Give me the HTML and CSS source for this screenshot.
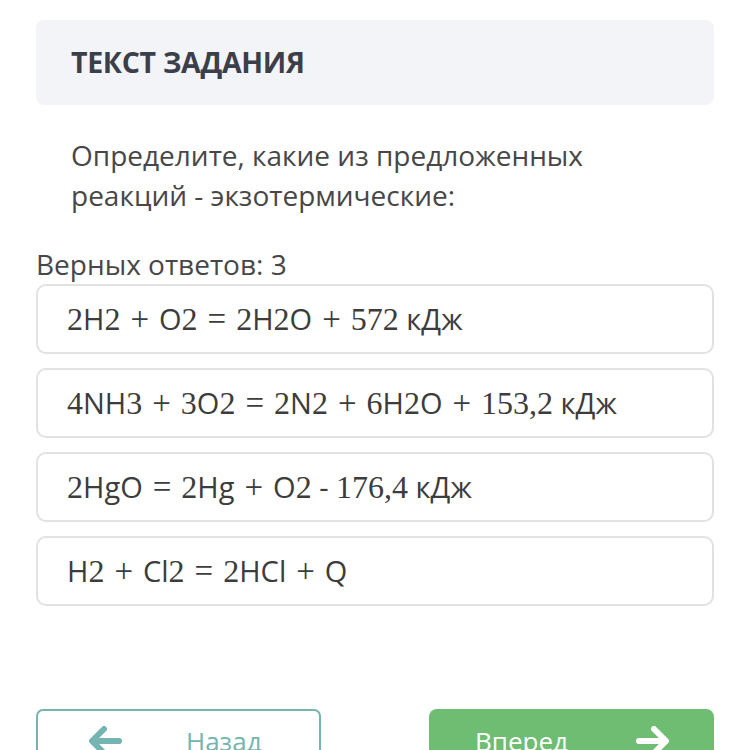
FILE: index.html
```html
<!DOCTYPE html>
<html lang="ru">
<head>
    <meta charset="UTF-8">
    <meta name="viewport" content="width=device-width, initial-scale=1.0">
    <title>Задание</title>
    <link rel="stylesheet" href="styles.css">
</head>
<body>
    <div class="page">
        <div class="task_head">ТЕКСТ ЗАДАНИЯ</div>
        <p class="task_text">Определите, какие из предложенных реакций - экзотермические:</p>
        <p class="count">Верных ответов: 3</p>
        <ul class="answers">
            <li><span class="m">2</span>H<span class="m">2</span><span class="op">+</span>O<span class="m">2</span><span class="op">=</span><span class="m">2</span>H<span class="m">2</span>O<span class="op">+</span><span class="m">572</span> кДж</li>
            <li><span class="m">4</span>NH<span class="m">3</span><span class="op">+</span><span class="m">3</span>O<span class="m">2</span><span class="op">=</span><span class="m">2</span>N<span class="m">2</span><span class="op">+</span><span class="m">6</span>H<span class="m">2</span>O<span class="op">+</span><span class="m">153,2</span> кДж</li>
            <li><span class="m">2</span>HgO<span class="op">=</span><span class="m">2</span>Hg<span class="op">+</span>O<span class="m">2</span> - <span class="m">176,4</span> кДж</li>
            <li>H<span class="m">2</span><span class="op">+</span>Cl<span class="m">2</span><span class="op">=</span><span class="m">2</span>HCl<span class="op">+</span>Q</li>
        </ul>
        <div class="nav">
            <button class="back">
                <svg width="34" height="30" viewBox="0 0 34 30"><path d="M16 3 L4 15 L16 27 M5 15 H31" fill="none" stroke="#74b4b1" stroke-width="6" stroke-linecap="round" stroke-linejoin="round"/></svg>
                <span>Назад</span>
            </button>
            <button class="next">
                <span>Вперед</span>
                <svg width="34" height="30" viewBox="0 0 34 30"><path d="M18 3 L30 15 L18 27 M29 15 H3" fill="none" stroke="#fff" stroke-width="6" stroke-linecap="round" stroke-linejoin="round"/></svg>
            </button>
        </div>
    </div>
</body>
</html>
```

FILE: styles.css
```css
*{
    margin: 0;
    padding: 0;
    box-sizing: border-box;
}
body{
    background-color: #fff;
    font-family: 'Open Sans', 'Noto Sans', sans-serif;
    color: #444;
}
.page{
    padding: 20px 36px 0 36px;
}
.task_head{
    border-radius: 8px;
    padding: 0 35px;
    height: 85px;
    line-height: 85px;
    font-weight: 700;
    font-size: 28.5px;
    letter-spacing: -0.3px;
    color: #3b3f4a;
    background-color: #f3f4f7;
}
.task_text{
    margin-top: 30px;
    padding: 0 60px 0 35px;
    font-size: 28px;
    line-height: 40px;
    color: #474747;
}
.count{
    margin-top: 29px;
    font-size: 28px;
    line-height: 40px;
    color: #474747;
}
.answers{
    list-style: none;
    display: flex;
    flex-direction: column;
    gap: 14px;
}
.answers li{
    white-space: pre;
    border: 2px solid #e2e2e2;
    border-radius: 10px;
    padding: 0 29px;
    height: 70px;
    line-height: 66px;
    font-size: 29px;
    color: #3c3c3c;
}
.m, .op{
    font-family: 'Liberation Serif', 'DejaVu Serif', serif;
    font-size: 32px;
    line-height: 1;
}
.op{
    padding: 0 10px;
    font-size: 33px;
}
.nav{
    margin-top: 103px;
    display: flex;
    justify-content: space-between;
}
.nav button{
    display: flex;
    align-items: center;
    width: 285px;
    height: 70px;
    padding-bottom: 6px;
    font-family: 'Open Sans', 'Noto Sans', sans-serif;
    font-size: 26px;
}
.back{
    border: 2px solid #74b4b1;
    border-radius: 7px;
    background-color: #fff;
    color: #74b4b1;
    padding-left: 50px;
    gap: 64px;
}
.next{
    border: none;
    border-radius: 8px;
    background-color: #6fbd72;
    color: #fff;
    padding-left: 46px;
    gap: 68px;
}
```
